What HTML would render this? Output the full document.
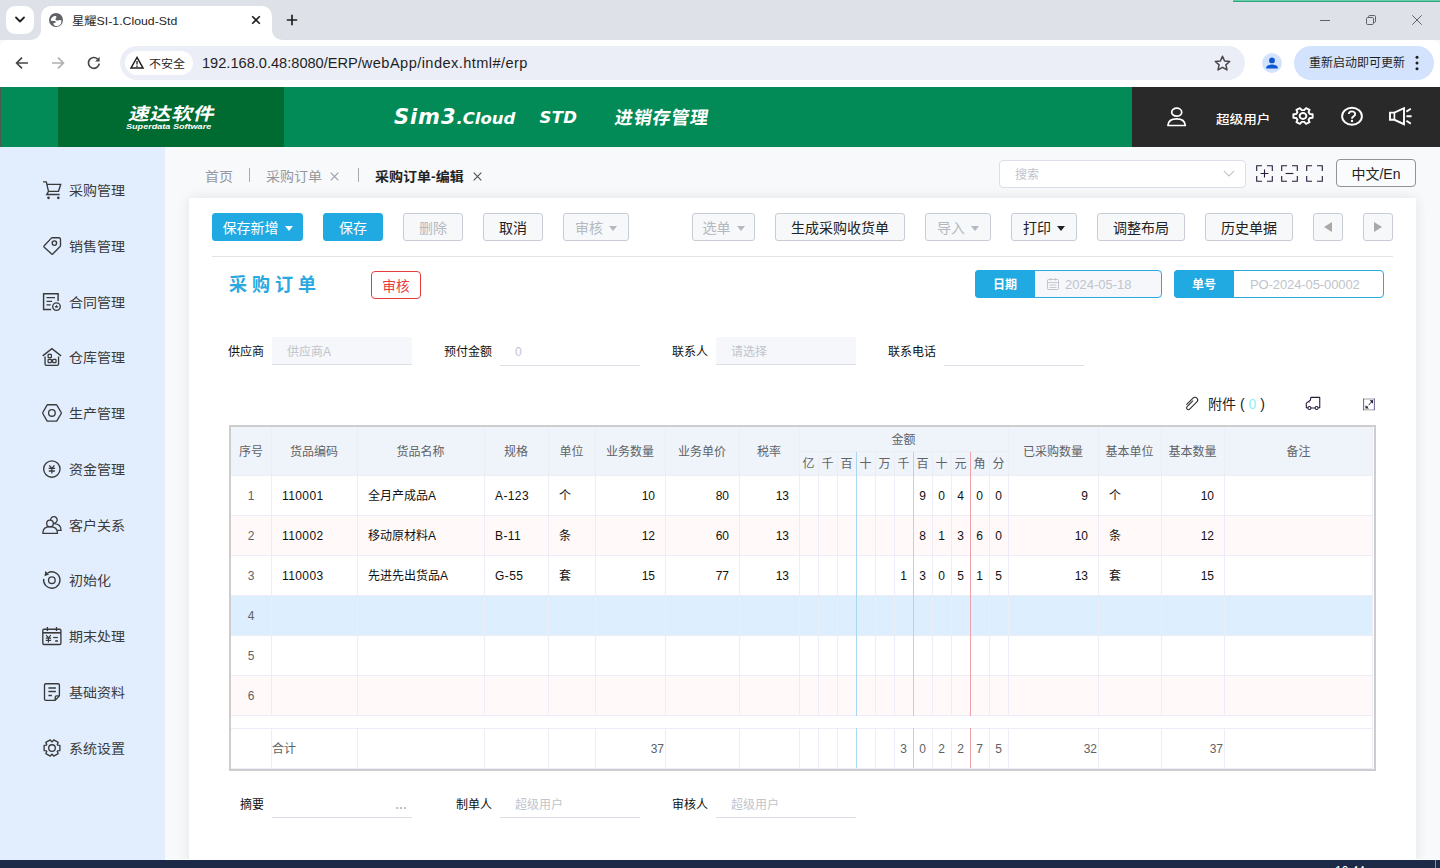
<!DOCTYPE html>
<html lang="zh-CN">
<head>
<meta charset="utf-8">
<title>星耀SI-1.Cloud-Std</title>
<style>
*{box-sizing:border-box;margin:0;padding:0}
html,body{width:1440px;height:868px;overflow:hidden;background:#f8f9fb}
body{position:relative;font-family:"Liberation Sans","Noto Sans CJK SC",sans-serif;font-size:12px;color:#333;-webkit-font-smoothing:antialiased}
.a{position:absolute;white-space:nowrap}
svg{position:absolute;overflow:visible}
/* browser chrome */
#strip{left:0;top:0;width:1440px;height:40px;background:#dee1e8}
#tool{left:0;top:40px;width:1440px;height:47px;background:#fff;border-radius:8px 8px 0 0}
#tab{left:41px;top:6px;width:231px;height:34px;background:#fff;border-radius:10px 10px 0 0}
#tabdd{left:6px;top:6px;width:28px;height:28px;background:#fff;border-radius:9px}
#omni{left:120px;top:46px;width:1125px;height:34px;background:#ebeef7;border-radius:17px}
#chip{left:125px;top:51px;width:68px;height:24px;background:#fff;border-radius:12px}
#upd{left:1294px;top:46px;width:140px;height:34px;background:#d3e3fd;border-radius:17px}
/* app header */
#hdr{left:0;top:87px;width:1440px;height:60px;background:#028b56}
#logo{left:58px;top:87px;width:226px;height:60px;background:#006b30}
#hdrR{left:1132px;top:87px;width:308px;height:60px;background:#292929}
/* sidebar */
#side{left:0;top:147px;width:165px;height:713px;background:#e2eefe}
.mi{left:69px;font-size:14px;line-height:20px;color:#3a3a3a;height:20px;transform:scaleY(.93)}
/* main */
#card{left:189px;top:198px;width:1227px;height:670px;background:#fff;box-shadow:0 0 12px rgba(0,0,0,.09)}
#task{left:0;top:860px;width:1440px;height:8px;background:#1c2a48}
</style>
</head>
<body>
<!-- ===== browser chrome ===== -->
<div class="a" id="strip"></div>
<div class="a" style="left:1233px;top:0;width:207px;height:2px;background:linear-gradient(#63cfa9 0,#63cfa9 55%,#35a17f 55%)"></div>
<div class="a" id="tool"></div>
<div class="a" id="tabdd"></div>
<svg style="left:14px;top:15px" width="12" height="10" viewBox="0 0 12 10"><path d="M2 2.5 L6 6.5 L10 2.5" fill="none" stroke="#1f1f1f" stroke-width="1.8" stroke-linecap="round" stroke-linejoin="round"/></svg>
<div class="a" id="tab"></div>
<svg style="left:31px;top:30px" width="10" height="10" viewBox="0 0 10 10"><path d="M0 10 H10 V0 A10 10 0 0 1 0 10Z" fill="#fff"/></svg>
<svg style="left:272px;top:30px" width="10" height="10" viewBox="0 0 10 10"><path d="M10 10 H0 V0 A10 10 0 0 0 10 10Z" fill="#fff"/></svg>
<svg style="left:49px;top:13px" width="14" height="14" viewBox="0 0 14 14"><circle cx="7" cy="7" r="7" fill="#5f6368"/><path d="M1.700 7.400 C2 5 3.600 3.400 5.800 3 C7 2.900 7.800 3.600 7.400 4.600 C7 5.600 6.200 5.800 6.600 6.800 C7 7.800 8.600 7.800 9.800 7.200 C10.800 6.700 12 6.800 12.500 7.800 C12.600 9.400 12 10.800 11 11.800 C10 12.800 8.600 13.200 7 13 C5.600 12.900 4.600 12 4.400 10.800 C4.300 9.800 5.600 10 6.600 9.600 C7.200 9.200 6.800 8.200 5.800 8 C4.600 7.800 3.200 8.200 1.700 7.400 Z" fill="#fff"/></svg>
<div class="a" style="left:72px;top:11.500px;font-size:12.300px;line-height:18px;color:#1f1f1f;transform:scaleY(.93)">星耀SI-1.Cloud-Std</div>
<svg style="left:251px;top:15px" width="10" height="10" viewBox="0 0 10 10"><path d="M1.2 1.2 L8.8 8.8 M8.8 1.2 L1.2 8.8" stroke="#1f1f1f" stroke-width="1.6" fill="none"/></svg>
<svg style="left:286px;top:14px" width="12" height="12" viewBox="0 0 12 12"><path d="M6 0.8 V11.2 M0.8 6 H11.2" stroke="#1f1f1f" stroke-width="1.7" fill="none"/></svg>
<!-- window controls -->
<div class="a" style="left:1320px;top:20px;width:10px;height:1px;background:#5f6368"></div>
<svg style="left:1366px;top:15px" width="10" height="10" viewBox="0 0 10 10"><rect x="0.500" y="2.500" width="7" height="7" rx="1.200" fill="none" stroke="#5f6368"/><path d="M2.500 2.500 V1.700 A1.200 1.200 0 0 1 3.700 0.500 H8.300 A1.200 1.200 0 0 1 9.500 1.700 V6.300 A1.200 1.200 0 0 1 8.300 7.500 H7.500" fill="none" stroke="#5f6368"/></svg>
<svg style="left:1412px;top:15px" width="10" height="10" viewBox="0 0 10 10"><path d="M0.300 0.300 L9.700 9.700 M9.700 0.300 L0.300 9.700" stroke="#5f6368" stroke-width="1" fill="none"/></svg>
<!-- nav buttons -->
<svg style="left:15px;top:56px" width="14" height="14" viewBox="0 0 14 14"><path d="M13 7 H1.800 M7 1.600 L1.600 7 L7 12.400" fill="none" stroke="#474747" stroke-width="1.7" stroke-linejoin="miter"/></svg>
<svg style="left:51px;top:56px" width="14" height="14" viewBox="0 0 14 14"><path d="M1 7 H12.200 M7 1.600 L12.400 7 L7 12.400" fill="none" stroke="#b0b0b0" stroke-width="1.7"/></svg>
<svg style="left:87px;top:56px" width="14" height="14" viewBox="0 0 14 14"><path d="M12.2 7.6 A5.400 5.400 0 1 1 10.600 3" fill="none" stroke="#474747" stroke-width="1.7"/><path d="M12.600 0.800 V5.400 H8 Z" fill="#474747"/></svg>
<div class="a" id="omni"></div>
<div class="a" id="chip"></div>
<svg style="left:130px;top:56px" width="14" height="13" viewBox="0 0 14 13"><path d="M7 1.400 L13 12 H1 Z" fill="none" stroke="#1f1f1f" stroke-width="1.500" stroke-linejoin="miter"/><path d="M7 5 V8.600 M7 9.600 V11" stroke="#1f1f1f" stroke-width="1.300"/></svg>
<div class="a" style="left:149px;top:54.700px;font-size:12px;line-height:18px;color:#1f1f1f;transform:scaleY(.9)">不安全</div>
<div class="a" style="left:202px;top:53px;font-size:14.600px;line-height:20px;color:#1f1f1f;letter-spacing:0">192.168.0.48:8080/ERP/<span style="letter-spacing:0.430px">webApp/index.html#/erp</span></div>
<svg style="left:1214px;top:55px" width="17" height="16" viewBox="0 0 17 16"><path d="M8.500 1.300 L10.600 6 L15.700 6.500 L11.900 9.900 L13 14.900 L8.500 12.300 L4 14.900 L5.100 9.900 L1.300 6.500 L6.400 6 Z" fill="none" stroke="#474747" stroke-width="1.500" stroke-linejoin="round"/></svg>
<svg style="left:1262px;top:53px" width="20" height="20" viewBox="0 0 20 20"><circle cx="10" cy="10" r="10" fill="#d3e3fd"/><circle cx="10" cy="7.400" r="2.900" fill="#0b57d0"/><path d="M4.200 14.800 C4.200 12.200 7.600 11.400 10 11.400 C12.400 11.400 15.800 12.200 15.800 14.800 V15.500 H4.200 Z" fill="#0b57d0"/></svg>
<div class="a" id="upd"></div>
<div class="a" style="left:1309px;top:54px;font-size:12px;line-height:18px;color:#1f1f1f">重新启动即可更新</div>
<svg style="left:1415px;top:55px" width="4" height="16" viewBox="0 0 4 16"><circle cx="2" cy="2.300" r="1.500" fill="#1f1f1f"/><circle cx="2" cy="8" r="1.500" fill="#1f1f1f"/><circle cx="2" cy="13.700" r="1.500" fill="#1f1f1f"/></svg>
<!-- ===== app header ===== -->
<div class="a" id="hdr"></div>
<div class="a" style="left:0;top:87px;width:1px;height:60px;background:#4a5a52"></div>
<div class="a" id="logo"></div>
<div class="a" style="left:125.500px;top:100.800px;font-size:17.500px;line-height:26px;color:#fff;font-weight:bold;letter-spacing:0.500px;transform:skewX(-14deg) scaleX(1.2);transform-origin:left bottom">速达软件</div>
<div class="a" style="left:126px;top:122px;font-size:7.500px;line-height:9px;color:#fff;font-weight:bold;font-style:italic;transform:scaleX(1.210);transform-origin:left center">Superdata Software</div>
<div class="a" style="left:394px;top:101.600px;font-size:21px;line-height:30px;color:#fff;font-weight:bold;font-style:italic;font-family:'DejaVu Sans','Liberation Sans',sans-serif;letter-spacing:0.900px">Sim3<span style="font-size:16.500px;letter-spacing:0">.Cloud</span></div>
<div class="a" style="left:539.400px;top:105.200px;font-size:16.500px;line-height:26px;color:#fff;font-weight:bold;font-style:italic;font-family:'DejaVu Sans','Liberation Sans',sans-serif;letter-spacing:0.400px">STD</div>
<div class="a" style="left:613px;top:105px;font-size:18px;line-height:26px;color:#fff;font-weight:bold;letter-spacing:0.800px;transform:skewX(-9deg);transform-origin:left bottom">进销存管理</div>
<div class="a" id="hdrR"></div>
<svg style="left:1167px;top:107px" width="20" height="20" viewBox="0 0 20 20"><ellipse cx="9.700" cy="5.200" rx="5" ry="4" fill="none" stroke="#fff" stroke-width="1.700"/><path d="M0.900 18.500 C1.200 14.200 4.600 11.800 9.600 11.800 C14.600 11.800 18 14.200 18.300 18.500 Z" fill="none" stroke="#fff" stroke-width="1.700" stroke-linejoin="round"/></svg>
<div class="a" style="left:1216px;top:109.500px;font-size:13.600px;line-height:20px;color:#fff;font-weight:500;transform:scaleY(.9)">超级用户</div>
<svg style="left:1303px;top:116px" width="1" height="1" viewBox="0 0 1 1"><path d="M6.77 -2.05 L9.62 -1.70 L9.62 1.70 L6.77 2.05 L5.52 3.86 L6.58 6.09 L3.04 7.80 L1.25 5.91 L-1.25 5.91 L-3.04 7.80 L-6.58 6.09 L-5.52 3.86 L-6.77 2.05 L-9.62 1.70 L-9.62 -1.70 L-6.77 -2.05 L-5.52 -3.86 L-6.58 -6.09 L-3.04 -7.80 L-1.25 -5.91 L1.25 -5.91 L3.04 -7.80 L6.58 -6.09 L5.52 -3.86 Z" fill="none" stroke="#fff" stroke-width="1.900" stroke-linejoin="round"/><ellipse cx="0" cy="0" rx="3.400" ry="3" fill="none" stroke="#fff" stroke-width="1.900"/></svg>
<svg style="left:1341px;top:106px" width="22" height="20" viewBox="0 0 22 20"><ellipse cx="11" cy="10.200" rx="9.900" ry="8.500" fill="none" stroke="#fff" stroke-width="1.900"/><path d="M7.800 8 A3.200 2.700 0 1 1 12.600 10.400 C11.400 11 11 11.500 11 12.700" fill="none" stroke="#fff" stroke-width="1.900"/><circle cx="11" cy="15" r="1.200" fill="#fff"/></svg>
<svg style="left:1389px;top:106px" width="23" height="20" viewBox="0 0 23 20"><path d="M1 6.600 H5.400 L15 2.200 V18.200 L5.400 13.800 H1 Z" fill="none" stroke="#fff" stroke-width="1.900" stroke-linejoin="miter"/><path d="M5.400 6.600 V13.800" stroke="#fff" stroke-width="1.700"/><path d="M17.400 10.200 H22.600 M17.400 5.600 L21.800 2.800 M17.400 14.800 L21.800 17.600" stroke="#fff" stroke-width="1.900" fill="none"/></svg>
<!-- ===== sidebar ===== -->
<div class="a" id="side"></div>
<div class="a mi" style="top:180px">采购管理</div>
<div class="a mi" style="top:236px">销售管理</div>
<div class="a mi" style="top:292px">合同管理</div>
<div class="a mi" style="top:347px">仓库管理</div>
<div class="a mi" style="top:403px">生产管理</div>
<div class="a mi" style="top:459px">资金管理</div>
<div class="a mi" style="top:515px">客户关系</div>
<div class="a mi" style="top:570px">初始化</div>
<div class="a mi" style="top:626px">期末处理</div>
<div class="a mi" style="top:682px">基础资料</div>
<div class="a mi" style="top:738px">系统设置</div>
<svg style="left:42px;top:180px" width="20" height="20" viewBox="0 0 20 20"><path d="M1 1.900 H4.300 L6.500 11.300 L4.700 14.500 H17.600 M5 4.300 H18.700 L16.500 11.300 H6.500" fill="none" stroke="#3a3a3a" stroke-width="1.350" stroke-linejoin="miter"/><circle cx="6.5" cy="17.8" r="1.35" fill="#3a3a3a"/><circle cx="16.3" cy="17.8" r="1.35" fill="#3a3a3a"/></svg>
<svg style="left:42px;top:236px" width="20" height="20" viewBox="0 0 20 20"><path d="M10.400 1.700 H16.800 Q18.500 1.700 18.500 3.400 V9.400 Q18.500 10 18.100 10.400 L11 17.800 Q10.200 18.600 9.400 17.800 L2.200 11.300 Q1.400 10.500 2.200 9.700 L9.400 2.100 Q9.800 1.700 10.400 1.700 Z" fill="none" stroke="#3a3a3a" stroke-width="1.350" /><circle cx="12.4" cy="7.1" r="2.2" fill="none" stroke="#3a3a3a" stroke-width="1.350"/></svg>
<svg style="left:42px;top:292px" width="20" height="20" viewBox="0 0 20 20"><path d="M16.100 9 V1.700 H1.600 V17.400 H9.200" fill="none" stroke="#3a3a3a" stroke-width="1.450" /><path d="M4.500 5.600 H13 M4.500 9.300 H10 M4.500 12.800 H8.700" fill="none" stroke="#3a3a3a" stroke-width="1.300" /><circle cx="14.5" cy="14.6" r="3.8" fill="none" stroke="#3a3a3a" stroke-width="1.350"/><path d="M14.500 12.600 L15.100 13.900 L16.500 14 L15.400 14.900 L15.800 16.300 L14.500 15.500 L13.200 16.300 L13.600 14.900 L12.500 14 L13.900 13.900 Z" fill="#3a3a3a"/></svg>
<svg style="left:42px;top:347px" width="20" height="20" viewBox="0 0 20 20"><path d="M0.700 8.900 L9.900 1.700 L19.100 8.900" fill="none" stroke="#3a3a3a" stroke-width="1.350" stroke-linejoin="miter"/><path d="M3.050 9.500 V16.900 Q3.050 18.300 4.450 18.300 H15.150 Q16.550 18.300 16.550 16.900 V9.500" fill="none" stroke="#3a3a3a" stroke-width="1.350" /><rect x="6.1" y="7.4" width="3.3" height="3.1" rx="0.600" fill="none" stroke="#3a3a3a" stroke-width="1.250"/><rect x="6.1" y="12.3" width="3.3" height="3.3" rx="0.600" fill="none" stroke="#3a3a3a" stroke-width="1.250"/><rect x="10.7" y="12.3" width="3.3" height="3.3" rx="0.600" fill="none" stroke="#3a3a3a" stroke-width="1.250"/></svg>
<svg style="left:42px;top:403px" width="20" height="20" viewBox="0 0 20 20"><path d="M5.800 1.750 H14.100 Q14.700 1.750 15 2.300 L19.200 9.500 Q19.500 10 19.200 10.500 L15 17.600 Q14.700 18.150 14.100 18.150 H5.800 Q5.200 18.150 4.900 17.600 L0.800 10.500 Q0.500 10 0.800 9.500 L4.900 2.300 Q5.200 1.750 5.800 1.750 Z" fill="none" stroke="#3a3a3a" stroke-width="1.350" /><circle cx="9.9" cy="9.95" r="3.3" fill="none" stroke="#3a3a3a" stroke-width="1.350"/></svg>
<svg style="left:42px;top:459px" width="20" height="20" viewBox="0 0 20 20"><circle cx="9.85" cy="10" r="8.2" fill="none" stroke="#3a3a3a" stroke-width="1.350"/><path d="M7.300 6.300 L9.850 9.400 L12.400 6.300 M9.850 9.400 V14.600 M6.600 9.400 H13.100 M6.800 12 H12.900" fill="none" stroke="#3a3a3a" stroke-width="1.300" /></svg>
<svg style="left:42px;top:515px" width="20" height="20" viewBox="0 0 20 20"><circle cx="8" cy="8.4" r="3.3" fill="none" stroke="#3a3a3a" stroke-width="1.350"/><path d="M0.800 18.300 C0.800 13.600 4 11.600 8 11.600 C12 11.600 15.500 13.600 15.500 18.300 Z" fill="none" stroke="#3a3a3a" stroke-width="1.350" stroke-linejoin="round"/><path d="M8.610 5.160 A3.300 3.300 0 1 1 11.290 8.140 M12.200 8.700 C16.400 9 19.100 11.600 19.100 15.400 H15.300" fill="none" stroke="#3a3a3a" stroke-width="1.350" /></svg>
<svg style="left:42px;top:570px" width="20" height="20" viewBox="0 0 20 20"><path d="M5.600 3 A8.200 8.200 0 1 1 1.700 8.800" fill="none" stroke="#3a3a3a" stroke-width="1.350" /><path d="M3.300 1 L2.500 6.200 L7.100 4.500 Z" fill="#3a3a3a"/><circle cx="9.85" cy="10.2" r="3.3" fill="none" stroke="#3a3a3a" stroke-width="1.350"/></svg>
<svg style="left:42px;top:626px" width="20" height="20" viewBox="0 0 20 20"><rect x="0.800" y="3.200" width="18.100" height="15.300" rx="1.200" fill="none" stroke="#3a3a3a" stroke-width="1.350"/><path d="M0.800 6.800 H18.900" fill="none" stroke="#3a3a3a" stroke-width="1.600" /><path d="M5.400 1 V5 M14.500 1 V5" fill="none" stroke="#3a3a3a" stroke-width="1.350" /><path d="M4.100 9.100 L6.450 11.800 L8.800 9.100 M6.450 11.800 V16.500 M3.800 12.100 H9.100 M3.800 14.300 H9.100" fill="none" stroke="#3a3a3a" stroke-width="1.150" /><path d="M11.100 11.500 H15.900" fill="none" stroke="#3a3a3a" stroke-width="1.200" /><path d="M13.200 15 H15.900" fill="none" stroke="#3a3a3a" stroke-width="1.600" /></svg>
<svg style="left:42px;top:682px" width="20" height="20" viewBox="0 0 20 20"><path d="M17.400 13.900 V3.100 Q17.400 1.700 16 1.700 H3.900 Q2.500 1.700 2.500 3.100 V16.900 Q2.500 18.300 3.900 18.300 H13.200 L17.400 13.900 H14.600 Q13.200 13.900 13.200 15.300 V18.300" fill="none" stroke="#3a3a3a" stroke-width="1.350" stroke-linejoin="round"/><path d="M6.400 6 H13.900 M6.400 9.500 H13.900 M6.400 13.500 H9.900" fill="none" stroke="#3a3a3a" stroke-width="1.350" /></svg>
<svg style="left:51.900px;top:747.900px" width="1" height="1" viewBox="0 0 1 1"><path d="M5.61 -2.86 L7.89 -2.56 L7.89 2.56 L5.61 2.86 L5.28 3.43 L6.17 5.55 L1.73 8.12 L0.33 6.29 L-0.33 6.29 L-1.73 8.12 L-6.17 5.55 L-5.28 3.43 L-5.61 2.86 L-7.89 2.56 L-7.89 -2.56 L-5.61 -2.86 L-5.28 -3.43 L-6.17 -5.55 L-1.73 -8.12 L-0.33 -6.29 L0.33 -6.29 L1.73 -8.12 L6.17 -5.55 L5.28 -3.43 Z" fill="none" stroke="#3a3a3a" stroke-width="1.350" stroke-linejoin="round"/><circle cx="0" cy="0" r="3.300" fill="none" stroke="#3a3a3a" stroke-width="1.350"/></svg>
<!-- ===== main: tab bar ===== -->
<style>
.tb{font-size:14px;line-height:20px;top:165.500px;color:#94979d;transform:scaleY(.93)}
.btn{top:213px;height:28px;border:1px solid #c8ccd4;border-radius:3px;background:#f6f8fa;font-size:14px;line-height:28px;text-align:center;color:#222}
.btn.dis{color:#b4b8bf}
.btn.pri{background:#21a9e1;border-color:#21a9e1;color:#fff}
.lbl{font-size:12px;line-height:18px;color:#111;top:342.700px}
.inp{top:337px;height:28px;width:140px;border-bottom:1px solid #dcdfe6;font-size:12px;line-height:30px;color:#c0c4cc;padding-left:15px}
.inp.g{background:#f5f7fa}
.car{display:inline-block;width:0;height:0;border-left:4px solid transparent;border-right:4px solid transparent;border-top:5px solid currentColor;vertical-align:middle;margin-left:6px;position:relative;top:-1px}
</style>
<div class="a tb" style="left:205px">首页</div>
<div class="a" style="left:249px;top:168px;width:1px;height:14px;background:#a6a9b0"></div>
<div class="a tb" style="left:266px">采购订单</div>
<svg style="left:330px;top:172px" width="9" height="9" viewBox="0 0 9 9"><path d="M0.700 0.700 L8.300 8.300 M8.300 0.700 L0.700 8.300" stroke="#9a9da3" stroke-width="1.100"/></svg>
<div class="a" style="left:358px;top:168px;width:1px;height:14px;background:#a6a9b0"></div>
<div class="a tb" style="left:375px;color:#222;font-weight:bold">采购订单-编辑</div>
<svg style="left:473px;top:172px" width="9" height="9" viewBox="0 0 9 9"><path d="M0.700 0.700 L8.300 8.300 M8.300 0.700 L0.700 8.300" stroke="#555" stroke-width="1.200"/></svg>
<!-- search -->
<div class="a" style="left:999px;top:160px;width:247px;height:28px;background:#fff;border:1px solid #dcdfe8;border-radius:4px"></div>
<div class="a" style="left:1015px;top:166px;font-size:12px;line-height:18px;color:#c0c4cc">搜索</div>
<svg style="left:1223px;top:170px" width="12" height="7" viewBox="0 0 12 7"><path d="M0.800 0.800 L6 6 L11.200 0.800" fill="none" stroke="#c0c4cc" stroke-width="1.100"/></svg>
<!-- zoom icons -->
<svg style="left:1256px;top:165px" width="17" height="17" viewBox="0 0 17 17"><path d="M0.700 6 V0.700 H6 M11 0.700 H16.300 V6 M16.300 11 V16.300 H11 M6 16.300 H0.700 V11" fill="none" stroke="#2a1a3a" stroke-width="1.100"/><path d="M8.500 4.600 V12.400 M4.600 8.500 H12.400" stroke="#2a1a3a" stroke-width="1.100"/></svg>
<svg style="left:1281px;top:165px" width="17" height="17" viewBox="0 0 17 17"><path d="M0.700 6 V0.700 H6 M11 0.700 H16.300 V6 M16.300 11 V16.300 H11 M6 16.300 H0.700 V11" fill="none" stroke="#2a1a3a" stroke-width="1.100"/><path d="M4.600 8.500 H12.400" stroke="#2a1a3a" stroke-width="1.100"/></svg>
<svg style="left:1306px;top:165px" width="17" height="17" viewBox="0 0 17 17"><path d="M0.700 6 V0.700 H6 M11 0.700 H16.300 V6 M16.300 11 V16.300 H11 M6 16.300 H0.700 V11" fill="none" stroke="#2a1a3a" stroke-width="1.100"/></svg>
<div class="a" style="left:1336px;top:159px;width:80px;height:28px;border:1px solid #8f9298;border-radius:4px;background:#fafbfc;font-size:14px;line-height:28px;text-align:center;color:#222">中文/En</div>
<!-- ===== card ===== -->
<div class="a" id="card"></div>
<div class="a" style="left:165px;top:859px;width:1275px;height:1px;background:#fff"></div>
<div class="a btn pri" style="left:212px;width:91px">保存新增<span class="car"></span></div>
<div class="a btn pri" style="left:323px;width:60px">保存</div>
<div class="a btn dis" style="left:403px;width:60px">删除</div>
<div class="a btn" style="left:483px;width:60px">取消</div>
<div class="a btn dis" style="left:563px;width:66px">审核<span class="car"></span></div>
<div class="a btn dis" style="left:692px;width:63px">选单<span class="car"></span></div>
<div class="a btn" style="left:775px;width:130px">生成采购收货单</div>
<div class="a btn dis" style="left:925px;width:66px">导入<span class="car"></span></div>
<div class="a btn" style="left:1011px;width:66px">打印<span class="car"></span></div>
<div class="a btn" style="left:1097px;width:88px">调整布局</div>
<div class="a btn" style="left:1205px;width:88px">历史单据</div>
<div class="a btn" style="left:1313px;width:30px"></div>
<div class="a btn" style="left:1363px;width:30px"></div>
<svg style="left:1324px;top:222px" width="8" height="10" viewBox="0 0 8 10"><path d="M8 0 V10 L0 5 Z" fill="#a9a9a9"/></svg>
<svg style="left:1374px;top:222px" width="8" height="10" viewBox="0 0 8 10"><path d="M0 0 V10 L8 5 Z" fill="#a9a9a9"/></svg>
<div class="a" style="left:212px;top:256px;width:1181px;height:1px;background:#e2e4e8"></div>
<!-- title row -->
<div class="a" style="left:229px;top:273px;font-size:18px;line-height:24px;font-weight:bold;letter-spacing:5px;color:#29a9e0">采购订单</div>
<div class="a" style="left:371px;top:271px;width:50px;height:28px;border:1px solid #e83c3c;border-radius:4px;font-size:13.700px;line-height:29px;text-align:center;color:#e83c3c">审核</div>
<div class="a" style="left:975px;top:270px;width:187px;height:28px;border:1px solid #29a9e0;border-radius:4px;background:#f5f7fa"></div>
<div class="a" style="left:975px;top:270px;width:60px;height:28px;border-radius:4px 0 0 4px;background:#21a9e1;font-size:12px;line-height:30px;text-align:center;color:#fff;font-weight:bold">日期</div>
<svg style="left:1047px;top:278px" width="12" height="12" viewBox="0 0 12 12"><rect x="0.500" y="1.500" width="11" height="10" rx="1" fill="none" stroke="#c0c4cc"/><path d="M0.500 4.500 H11.500 M3.500 0 V2.500 M8.500 0 V2.500 M2.500 7 H9.500 M2.500 9.500 H9.500" stroke="#c0c4cc" stroke-width="0.900"/></svg>
<div class="a" style="left:1065px;top:276px;font-size:13px;line-height:18px;color:#c0c4cc">2024-05-18</div>
<div class="a" style="left:1174px;top:270px;width:210px;height:28px;border:1px solid #29a9e0;border-radius:4px;background:#fff"></div>
<div class="a" style="left:1174px;top:270px;width:60px;height:28px;border-radius:4px 0 0 4px;background:#21a9e1;font-size:12px;line-height:30px;text-align:center;color:#fff;font-weight:bold">单号</div>
<div class="a" style="left:1250px;top:276px;font-size:13px;line-height:18px;color:#c0c4cc;letter-spacing:-0.100px">PO-2024-05-00002</div>
<!-- form row -->
<div class="a lbl" style="left:228px">供应商</div>
<div class="a inp g" style="left:272px">供应商A</div>
<div class="a lbl" style="left:444px">预付金额</div>
<div class="a inp" style="left:500px;height:29px">0</div>
<div class="a lbl" style="left:672px">联系人</div>
<div class="a inp g" style="left:716px">请选择</div>
<div class="a lbl" style="left:888px">联系电话</div>
<div class="a inp" style="left:944px;height:29px"></div>
<!-- attachments row -->
<svg style="left:1191.200px;top:404px" width="1" height="1" viewBox="0 0 1 1"><path transform="rotate(-45)" d="M3.400 -0.900 L-4.600 -0.900 A1.800 1.800 0 0 0 -4.600 2.700 L5.600 2.700 A2.700 2.700 0 0 0 5.600 -2.700 L-3.400 -2.700" fill="none" stroke="#2a2a2a" stroke-width="1.050" stroke-linecap="round"/></svg>
<div class="a" style="left:1208px;top:394px;font-size:14px;line-height:20px;color:#222">附件 ( <span style="color:#8ef0f4">0</span> )</div>
<svg style="left:1305px;top:396px" width="16" height="15" viewBox="0 0 16 15"><path d="M5.700 1.400 H14.750 V11.800 H13.200 M5.700 1.400 L5.400 4.200 L1.300 7.100 V11.600 L2.900 12 M5.900 12 H10.100" fill="none" stroke="#2a1a3a" stroke-width="1.100" stroke-linejoin="round"/><circle cx="4.400" cy="12" r="1.500" fill="none" stroke="#2a1a3a" stroke-width="1.100"/><circle cx="11.600" cy="12" r="1.500" fill="none" stroke="#2a1a3a" stroke-width="1.100"/><path d="M4.300 5.400 L4.100 6.800" stroke="#6a3a8a" stroke-width="0.900"/></svg>
<svg style="left:1363px;top:398px" width="12" height="13" viewBox="0 0 12 13"><rect x="0.200" y="0.300" width="11.600" height="12.200" fill="#fff"/><path d="M0.200 1 H11.800 M0.200 11.800 H11.800" stroke="#c2c2c2" stroke-width="1.500"/><path d="M0.600 0.600 V12.200 M11.400 0.600 V12.200" stroke="#5b4b8a" stroke-width="0.900"/><path d="M3 10 L9.600 2.800" stroke="#222" stroke-width="1" stroke-dasharray="2.200 1.600 6 0"/><path d="M6.600 2.300 H10 V5.700 Z M2.500 7.200 V10.600 H5.900 Z" fill="#1a1a2a"/></svg>
<!-- bottom form -->
<div class="a lbl" style="left:240px;top:795.500px">摘要</div>
<div class="a inp" style="left:272px;top:790px"></div>
<div class="a" style="left:395.500px;top:799px;font-size:12px;line-height:12px;color:#b4b8c0;letter-spacing:0.500px;font-weight:bold">...</div>
<div class="a lbl" style="left:456px;top:795.500px">制单人</div>
<div class="a inp" style="left:500px;top:790px">超级用户</div>
<div class="a lbl" style="left:672px;top:795.500px">审核人</div>
<div class="a inp" style="left:716px;top:790px">超级用户</div>
<!-- ===== grid table ===== -->
<style>
.th{font-size:12px;line-height:18px;color:#606266;text-align:center}
.td{font-size:12px;line-height:18px;color:#111}
.tn{font-size:12px;line-height:18px;color:#606266;text-align:center}
.vl{width:1px;background:#ededf8}
.hl{height:1px;background:#ededf8}
</style>
<div class="a" style="left:229px;top:425px;width:1147px;height:346px;border:2px solid #cdcdcd;background:#fff"></div>
<div class="a" style="left:231px;top:427px;width:1142px;height:48px;background:#eff4fa"></div>
<div class="a" style="left:231px;top:515px;width:1142px;height:40px;background:#fffaf9"></div>
<div class="a" style="left:231px;top:595px;width:1142px;height:40px;background:#ddeeff"></div>
<div class="a" style="left:231px;top:675px;width:1142px;height:40px;background:#fffaf9"></div>
<div class="a hl" style="left:231px;top:475px;width:1142px"></div>
<div class="a hl" style="left:231px;top:515px;width:1142px"></div>
<div class="a hl" style="left:231px;top:555px;width:1142px"></div>
<div class="a hl" style="left:231px;top:595px;width:1142px"></div>
<div class="a hl" style="left:231px;top:635px;width:1142px"></div>
<div class="a hl" style="left:231px;top:675px;width:1142px"></div>
<div class="a hl" style="left:231px;top:715px;width:1142px"></div>
<div class="a hl" style="left:231px;top:728px;width:1142px"></div>
<div class="a hl" style="left:231px;top:768px;width:1142px"></div>
<div class="a hl" style="left:799px;top:451px;width:209px"></div>
<div class="a vl" style="left:271px;top:427px;height:289px"></div>
<div class="a vl" style="left:271px;top:729px;height:39px"></div>
<div class="a vl" style="left:357px;top:427px;height:289px"></div>
<div class="a vl" style="left:357px;top:729px;height:39px"></div>
<div class="a vl" style="left:484px;top:427px;height:289px"></div>
<div class="a vl" style="left:484px;top:729px;height:39px"></div>
<div class="a vl" style="left:548px;top:427px;height:289px"></div>
<div class="a vl" style="left:548px;top:729px;height:39px"></div>
<div class="a vl" style="left:595px;top:427px;height:289px"></div>
<div class="a vl" style="left:595px;top:729px;height:39px"></div>
<div class="a vl" style="left:665px;top:427px;height:289px"></div>
<div class="a vl" style="left:665px;top:729px;height:39px"></div>
<div class="a vl" style="left:739px;top:427px;height:289px"></div>
<div class="a vl" style="left:739px;top:729px;height:39px"></div>
<div class="a vl" style="left:799px;top:427px;height:289px"></div>
<div class="a vl" style="left:799px;top:729px;height:39px"></div>
<div class="a vl" style="left:1008px;top:427px;height:289px"></div>
<div class="a vl" style="left:1008px;top:729px;height:39px"></div>
<div class="a vl" style="left:1098px;top:427px;height:289px"></div>
<div class="a vl" style="left:1098px;top:729px;height:39px"></div>
<div class="a vl" style="left:1161px;top:427px;height:289px"></div>
<div class="a vl" style="left:1161px;top:729px;height:39px"></div>
<div class="a vl" style="left:1224px;top:427px;height:289px"></div>
<div class="a vl" style="left:1224px;top:729px;height:39px"></div>
<div class="a vl" style="left:1372px;top:427px;height:342px"></div>
<div class="a" style="left:818px;top:452px;width:1px;height:264px;background:#ededf8"></div>
<div class="a" style="left:818px;top:728px;width:1px;height:40px;background:#ededf8"></div>
<div class="a" style="left:837px;top:452px;width:1px;height:264px;background:#ededf8"></div>
<div class="a" style="left:837px;top:728px;width:1px;height:40px;background:#ededf8"></div>
<div class="a" style="left:856px;top:452px;width:1px;height:264px;background:#a9d8f5"></div>
<div class="a" style="left:856px;top:728px;width:1px;height:40px;background:#a9d8f5"></div>
<div class="a" style="left:875px;top:452px;width:1px;height:264px;background:#ededf8"></div>
<div class="a" style="left:875px;top:728px;width:1px;height:40px;background:#ededf8"></div>
<div class="a" style="left:894px;top:452px;width:1px;height:264px;background:#ededf8"></div>
<div class="a" style="left:894px;top:728px;width:1px;height:40px;background:#ededf8"></div>
<div class="a" style="left:913px;top:452px;width:1px;height:264px;background:#a9d8f5"></div>
<div class="a" style="left:913px;top:728px;width:1px;height:40px;background:#a9d8f5"></div>
<div class="a" style="left:932px;top:452px;width:1px;height:264px;background:#ededf8"></div>
<div class="a" style="left:932px;top:728px;width:1px;height:40px;background:#ededf8"></div>
<div class="a" style="left:951px;top:452px;width:1px;height:264px;background:#ededf8"></div>
<div class="a" style="left:951px;top:728px;width:1px;height:40px;background:#ededf8"></div>
<div class="a" style="left:970px;top:452px;width:1px;height:264px;background:#f0a0a8"></div>
<div class="a" style="left:970px;top:728px;width:1px;height:40px;background:#f0a0a8"></div>
<div class="a" style="left:989px;top:452px;width:1px;height:264px;background:#ededf8"></div>
<div class="a" style="left:989px;top:728px;width:1px;height:40px;background:#ededf8"></div>
<div class="a th" style="left:231px;top:443px;width:40px">序号</div>
<div class="a th" style="left:271px;top:443px;width:86px">货品编码</div>
<div class="a th" style="left:357px;top:443px;width:127px">货品名称</div>
<div class="a th" style="left:484px;top:443px;width:64px">规格</div>
<div class="a th" style="left:548px;top:443px;width:47px">单位</div>
<div class="a th" style="left:595px;top:443px;width:70px">业务数量</div>
<div class="a th" style="left:665px;top:443px;width:74px">业务单价</div>
<div class="a th" style="left:739px;top:443px;width:60px">税率</div>
<div class="a th" style="left:1008px;top:443px;width:90px">已采购数量</div>
<div class="a th" style="left:1098px;top:443px;width:63px">基本单位</div>
<div class="a th" style="left:1161px;top:443px;width:63px">基本数量</div>
<div class="a th" style="left:1224px;top:443px;width:149px">备注</div>
<div class="a th" style="left:799px;top:431px;width:209px">金额</div>
<div class="a th" style="left:799px;top:455px;width:19px">亿</div>
<div class="a th" style="left:818px;top:455px;width:19px">千</div>
<div class="a th" style="left:837px;top:455px;width:19px">百</div>
<div class="a th" style="left:856px;top:455px;width:19px">十</div>
<div class="a th" style="left:875px;top:455px;width:19px">万</div>
<div class="a th" style="left:894px;top:455px;width:19px">千</div>
<div class="a th" style="left:913px;top:455px;width:19px">百</div>
<div class="a th" style="left:932px;top:455px;width:19px">十</div>
<div class="a th" style="left:951px;top:455px;width:19px">元</div>
<div class="a th" style="left:970px;top:455px;width:19px">角</div>
<div class="a th" style="left:989px;top:455px;width:19px">分</div>
<div class="a tn" style="left:231px;top:487px;width:40px">1</div>
<div class="a td" style="left:282px;top:487px;letter-spacing:0.400px">110001</div>
<div class="a td" style="left:368px;top:487px">全月产成品A</div>
<div class="a td" style="left:495px;top:487px;letter-spacing:0.400px">A-123</div>
<div class="a td" style="left:559px;top:487px">个</div>
<div class="a td" style="right:785px;top:487px">10</div>
<div class="a td" style="right:711px;top:487px">80</div>
<div class="a td" style="right:651px;top:487px">13</div>
<div class="a td" style="left:913px;top:487px;width:19px;text-align:center">9</div>
<div class="a td" style="left:932px;top:487px;width:19px;text-align:center">0</div>
<div class="a td" style="left:951px;top:487px;width:19px;text-align:center">4</div>
<div class="a td" style="left:970px;top:487px;width:19px;text-align:center">0</div>
<div class="a td" style="left:989px;top:487px;width:19px;text-align:center">0</div>
<div class="a td" style="right:352px;top:487px">9</div>
<div class="a td" style="left:1109px;top:487px">个</div>
<div class="a td" style="right:226px;top:487px">10</div>
<div class="a tn" style="left:231px;top:527px;width:40px">2</div>
<div class="a td" style="left:282px;top:527px;letter-spacing:0.400px">110002</div>
<div class="a td" style="left:368px;top:527px">移动原材料A</div>
<div class="a td" style="left:495px;top:527px;letter-spacing:0.400px">B-11</div>
<div class="a td" style="left:559px;top:527px">条</div>
<div class="a td" style="right:785px;top:527px">12</div>
<div class="a td" style="right:711px;top:527px">60</div>
<div class="a td" style="right:651px;top:527px">13</div>
<div class="a td" style="left:913px;top:527px;width:19px;text-align:center">8</div>
<div class="a td" style="left:932px;top:527px;width:19px;text-align:center">1</div>
<div class="a td" style="left:951px;top:527px;width:19px;text-align:center">3</div>
<div class="a td" style="left:970px;top:527px;width:19px;text-align:center">6</div>
<div class="a td" style="left:989px;top:527px;width:19px;text-align:center">0</div>
<div class="a td" style="right:352px;top:527px">10</div>
<div class="a td" style="left:1109px;top:527px">条</div>
<div class="a td" style="right:226px;top:527px">12</div>
<div class="a tn" style="left:231px;top:567px;width:40px">3</div>
<div class="a td" style="left:282px;top:567px;letter-spacing:0.400px">110003</div>
<div class="a td" style="left:368px;top:567px">先进先出货品A</div>
<div class="a td" style="left:495px;top:567px;letter-spacing:0.400px">G-55</div>
<div class="a td" style="left:559px;top:567px">套</div>
<div class="a td" style="right:785px;top:567px">15</div>
<div class="a td" style="right:711px;top:567px">77</div>
<div class="a td" style="right:651px;top:567px">13</div>
<div class="a td" style="left:894px;top:567px;width:19px;text-align:center">1</div>
<div class="a td" style="left:913px;top:567px;width:19px;text-align:center">3</div>
<div class="a td" style="left:932px;top:567px;width:19px;text-align:center">0</div>
<div class="a td" style="left:951px;top:567px;width:19px;text-align:center">5</div>
<div class="a td" style="left:970px;top:567px;width:19px;text-align:center">1</div>
<div class="a td" style="left:989px;top:567px;width:19px;text-align:center">5</div>
<div class="a td" style="right:352px;top:567px">13</div>
<div class="a td" style="left:1109px;top:567px">套</div>
<div class="a td" style="right:226px;top:567px">15</div>
<div class="a tn" style="left:231px;top:607px;width:40px">4</div>
<div class="a tn" style="left:231px;top:647px;width:40px">5</div>
<div class="a tn" style="left:231px;top:687px;width:40px">6</div>
<div class="a tn" style="left:272px;top:739.5px">合计</div>
<div class="a tn" style="right:776px;top:739.5px">37</div>
<div class="a tn" style="right:343px;top:739.5px">32</div>
<div class="a tn" style="right:217px;top:739.5px">37</div>
<div class="a tn" style="left:894px;top:739.5px;width:19px">3</div>
<div class="a tn" style="left:913px;top:739.5px;width:19px">0</div>
<div class="a tn" style="left:932px;top:739.5px;width:19px">2</div>
<div class="a tn" style="left:951px;top:739.5px;width:19px">2</div>
<div class="a tn" style="left:970px;top:739.5px;width:19px">7</div>
<div class="a tn" style="left:989px;top:739.5px;width:19px">5</div>
<!-- taskbar -->
<div class="a" id="task"></div>
<div class="a" style="left:1435px;top:860px;width:1px;height:8px;background:#8a93a6"></div>
<div class="a" style="left:1335px;top:865px;font-size:12px;line-height:12px;color:#fff;height:3px;overflow:hidden">10:44</div>
</body>
</html>
